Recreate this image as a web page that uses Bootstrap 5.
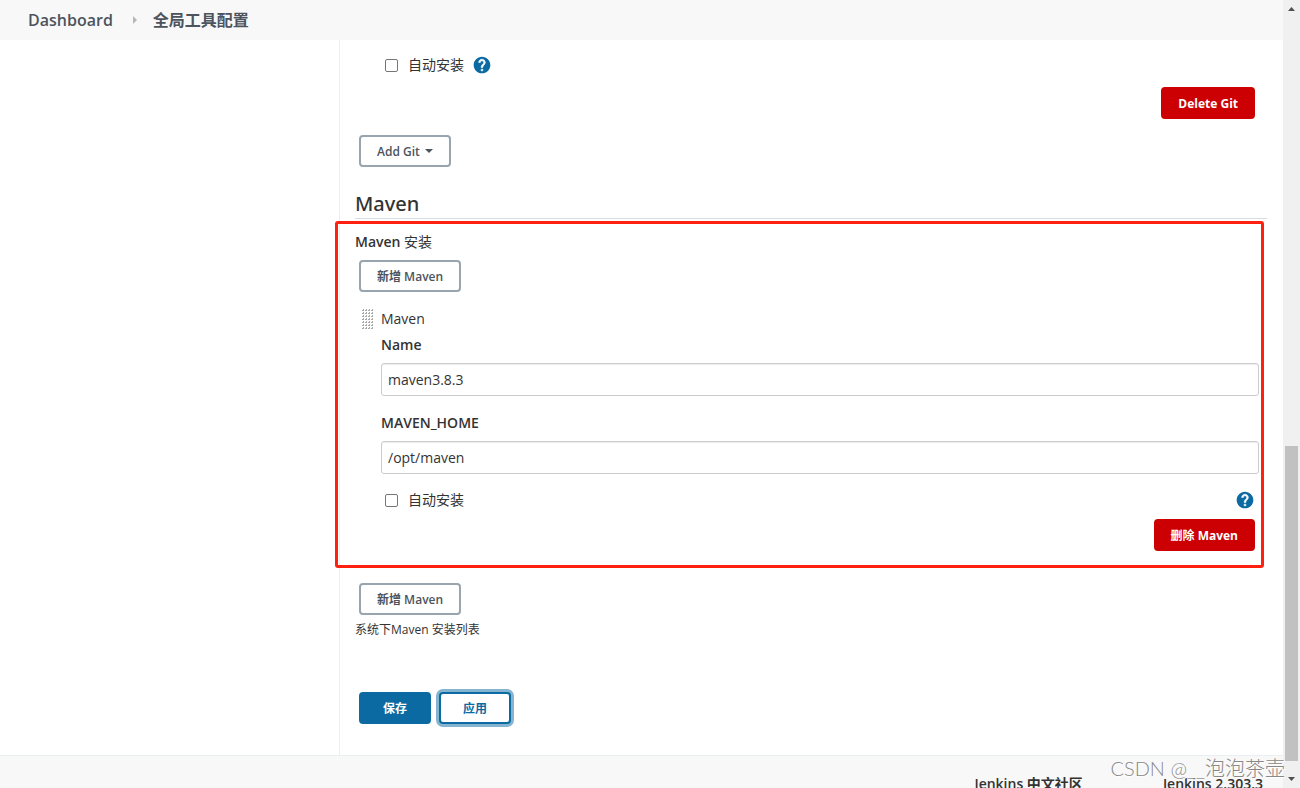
<!DOCTYPE html>
<html lang="zh-CN">
<head>
<meta charset="utf-8">
<meta name="viewport" content="width=device-width, initial-scale=1">
<title>全局工具配置 [Jenkins]</title>
<link href="https://cdn.jsdelivr.net/npm/bootstrap@5.3.0/dist/css/bootstrap.min.css" rel="stylesheet">
<style>
  body { font-family: "Open Sans", "Noto Sans CJK SC", sans-serif; font-size: 14px; line-height: 20px; color: #333; }
  .topbar { background: #f8f8f8; height: 40px; padding-left: 28px; font-size: 16px; font-weight: 600; }
  .topbar a { color: #4d545d; text-decoration: none; }
  .crumb-arrow { margin: 0 16px 0 20px; }
  .side-panel { width: 340px; border-right: 1px solid #eaeff2; }
  .config { min-width: 0; padding: 15px 16px 31px 15px; }
  .indent { padding-left: 26px; }
  .tick-row { height: 20px; padding-left: 4px; }
  .tick-row .form-check-input { width: 13px; height: 13px; margin: 0 10px 0 0; border: 1px solid #767676; border-radius: 2px; }
  .help-link { line-height: 0; }
  .jbtn { --bs-btn-font-size: 12px; --bs-btn-font-weight: 600; --bs-btn-line-height: 16px; --bs-btn-padding-x: 16px; --bs-btn-border-width: 2px; --bs-btn-border-radius: 4px; padding-top: 7px; padding-bottom: 5px; height: 32px; white-space: nowrap; }
  .jbtn.dropdown-toggle::after { border-width: 4px 4px 0; margin-left: 5px; vertical-align: 3px; }
  .jbtn-plain { --bs-btn-color: #4d545d; --bs-btn-bg: #fff; --bs-btn-border-color: #98a4ae; --bs-btn-hover-color: #4d545d; --bs-btn-hover-border-color: #4d545d; margin-left: 4px; }
  .jbtn-danger { --bs-btn-color: #fff; --bs-btn-bg: #cc0003; --bs-btn-border-color: #cc0003; --bs-btn-hover-color: #fff; --bs-btn-hover-bg: #a80002; --bs-btn-font-weight: 700; --bs-btn-padding-x: 15px; margin-right: 12px; }
  .jbtn-main { --bs-btn-color: #fff; --bs-btn-bg: #0b6aa2; --bs-btn-border-color: #0b6aa2; --bs-btn-hover-color: #fff; --bs-btn-hover-bg: #095683; width: 72px; }
  .jbtn-apply { --bs-btn-color: #0b6aa2; --bs-btn-bg: #fff; --bs-btn-border-color: #0b6aa2; --bs-btn-hover-color: #0b6aa2; width: 72px; box-shadow: 0 0 0 3px #85b4d0; }
  .section-title { font-family: "Noto Sans", "Open Sans", sans-serif; font-size: 20px; line-height: 28px; font-weight: 500; color: #333; margin: 23px 0 0; border-bottom: 1px solid #d9dcde; }
  .field-name { font-weight: 600; line-height: 20px; }
  .field-box.form-control { font-size: 14px; line-height: 21px; height: 33px; padding: 5px 6px; color: #333; border: 1px solid #ccc; border-radius: 3px; box-shadow: inset 0 1px 1px #00000013; }
  .maven-install { padding: 13px 0 16px; }
  .maven-head { margin-top: 17px; }
  .maven-fields { padding: 6px 8px 0 0; }
  .next-field { margin-top: 17px; }
  .remove-row { margin-top: 9px; }
  .red-frame { inset: 2px 3px -1px -20px; border: 3px solid #ff2010; border-radius: 3px; pointer-events: none; }
  .drag-grip { width: 12px; height: 20px; margin: 0 7px; }
  .list-note { font-size: 12px; margin-top: 5px; }
  .form-actions { margin: 52px 0 0 4px; }
  .footer-bar { background: #f8f8f8; border-top: 1px solid #eaeff2; height: 80px; padding: 18px 20px 0 0; font-weight: 600; gap: 80px; }
  .footer-bar a { color: #333; text-decoration: none; }
  .credit { right: 15px; bottom: 6px; font: 300 20px/28px Lato, "Noto Sans CJK SC", sans-serif; color: #888; text-shadow: 1px 1px 0 #fff; white-space: nowrap; }
  .scroll-track { width: 17px; background: #f0f0f0; padding: 7px 2px; }
  .scroll-thumb { flex: 315 0 0; width: 13px; background: #c1c1c1; }
  .scroll-gap { flex: 435 0 0; }
</style>
</head>
<body class="d-flex vh-100 overflow-hidden position-relative">
<svg width="0" height="0" class="position-absolute" aria-hidden="true">
  <symbol id="help" viewBox="0 0 24 24"><path fill="#0b6aa2" d="M12 2C6.48 2 2 6.48 2 12s4.48 10 10 10 10-4.48 10-10S17.52 2 12 2zm1 17h-2v-2h2v2zm2.07-7.75-.9.92C13.45 12.9 13 13.5 13 15h-2v-.5c0-1.1.45-2.1 1.17-2.83l1.24-1.26c.37-.36.59-.86.59-1.41 0-1.1-.9-2-2-2s-2 .9-2 2H8c0-2.21 1.79-4 4-4s4 1.79 4 4c0 .88-.36 1.68-.93 2.25z"/><path fill="none" stroke="#fff" stroke-width=".7" d="M13 19h-2v-2h2v2zm2.070-7.750-.9.92C13.45 12.9 13 13.5 13 15h-2v-.5c0-1.1.45-2.1 1.17-2.83l1.24-1.26c.37-.36.59-.86.59-1.41 0-1.1-.9-2-2-2s-2 .9-2 2H8c0-2.21 1.79-4 4-4s4 1.79 4 4c0 .88-.36 1.68-.93 2.25z"/></symbol>
</svg>

<div class="d-flex flex-column flex-grow-1 overflow-hidden">
  <nav class="topbar d-flex align-items-center flex-shrink-0" aria-label="breadcrumb">
    <a href="#">Dashboard</a>
    <svg class="crumb-arrow" width="4" height="8" viewBox="0 0 4 8"><path fill="#b5b8bb" d="M0 0l4 4-4 4z"/></svg>
    <a href="#">全局工具配置</a>
  </nav>

  <div class="d-flex flex-shrink-0">
    <aside class="side-panel flex-shrink-0"></aside>
    <main class="config flex-grow-1">
      <div class="indent">
        <div class="tick-row d-flex align-items-center">
          <input class="form-check-input" type="checkbox" id="git-auto">
          <label for="git-auto">自动安装</label>
          <a class="help-link ms-2" href="#" aria-label="帮助"><svg width="20" height="20"><use href="#help"/></svg></a>
        </div>
      </div>
      <div class="d-flex justify-content-end mt-2 pt-1">
        <button type="button" class="btn jbtn jbtn-danger">Delete Git</button>
      </div>
      <div class="d-flex mt-3">
        <button type="button" class="btn jbtn jbtn-plain dropdown-toggle">Add Git</button>
      </div>

      <h2 class="section-title">Maven</h2>
      <section class="maven-install position-relative">
        <div class="field-name">Maven <span class="fw-normal">安装</span></div>
        <div class="d-flex mt-2">
          <button type="button" class="btn jbtn jbtn-plain">新增 Maven</button>
        </div>
        <div class="maven-head d-flex align-items-center">
          <svg class="drag-grip" viewBox="0 0 12 20"><defs><pattern id="dots" width="3" height="3" patternUnits="userSpaceOnUse"><path fill="#aaa" d="M1 0h1v2H0V1h1z"/></pattern></defs><rect width="12" height="20" fill="url(#dots)"/></svg>
          <span>Maven</span>
        </div>
        <div class="indent">
          <div class="maven-fields">
            <label class="field-name d-block" for="maven-name">Name</label>
            <input class="form-control field-box mt-2" type="text" id="maven-name" value="maven3.8.3">
            <label class="field-name next-field d-block" for="maven-home">MAVEN_HOME</label>
            <input class="form-control field-box mt-2" type="text" id="maven-home" value="/opt/maven">
          </div>
          <div class="tick-row d-flex align-items-center mt-3 pe-2">
            <input class="form-check-input" type="checkbox" id="maven-auto">
            <label for="maven-auto">自动安装</label>
            <a class="help-link ms-auto me-1" href="#" aria-label="帮助"><svg width="20" height="20"><use href="#help"/></svg></a>
          </div>
        </div>
        <div class="remove-row d-flex justify-content-end">
          <button type="button" class="btn jbtn jbtn-danger">删除 Maven</button>
        </div>
        <div class="red-frame position-absolute"></div>
      </section>
      <div class="d-flex mt-3">
        <button type="button" class="btn jbtn jbtn-plain">新增 Maven</button>
      </div>
      <div class="list-note">系统下Maven 安装列表</div>

      <div class="form-actions d-flex gap-2">
        <button type="submit" class="btn jbtn jbtn-main">保存</button>
        <button type="button" class="btn jbtn jbtn-apply">应用</button>
      </div>
    </main>
  </div>

  <footer class="footer-bar d-flex justify-content-end flex-shrink-0">
    <a href="#">Jenkins 中文社区</a>
    <a href="#">Jenkins 2.303.3</a>
  </footer>
</div>

<div class="scroll-track d-flex flex-column align-items-center flex-shrink-0" aria-hidden="true">
  <svg width="7" height="4" viewBox="0 0 7 4"><path fill="#505050" d="M0 4l3.500-4L7 4z"/></svg>
  <div class="scroll-gap"></div>
  <div class="scroll-thumb"></div>
  <svg class="mt-3" width="7" height="4" viewBox="0 0 7 4"><path fill="#505050" d="M0 0h7L3.500 4z"/></svg>
</div>
<div class="credit position-absolute">CSDN @__泡泡茶壶</div>
<script src="https://cdn.jsdelivr.net/npm/bootstrap@5.3.0/dist/js/bootstrap.bundle.min.js"></script>
</body>
</html>
